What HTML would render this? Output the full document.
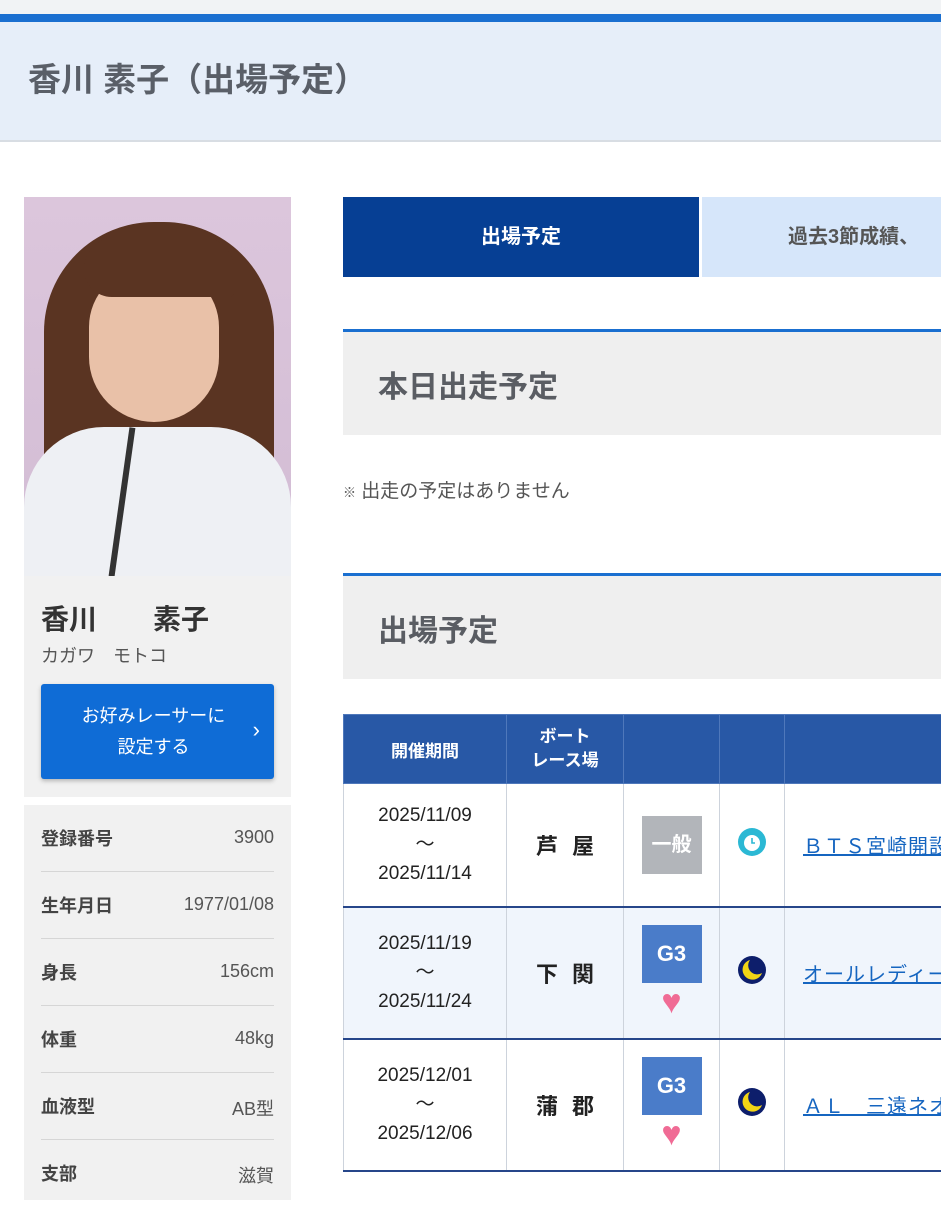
<!DOCTYPE html>
<html><head><meta charset="utf-8"><style>
*{margin:0;padding:0;box-sizing:border-box}
body{width:941px;height:1200px;overflow:hidden;background:#fff;font-family:"Liberation Sans","Noto Sans CJK JP",sans-serif;position:relative}
.abs{position:absolute}
.top{left:0;top:0;width:941px;height:14px;background:#f1f3f5}
.bl{left:0;top:14px;width:941px;height:8px;background:#1a6fd0}
.hd{left:0;top:22px;width:941px;height:120px;background:#e6eef9;border-bottom:2px solid #d8dde3}
.hd h1{position:absolute;left:28px;top:41px;font-size:33px;color:#5a5f68;font-weight:bold;line-height:1}
.photo{left:24px;top:197px;width:267px;height:379px;background:linear-gradient(#dcc6dc,#d2bcd4);overflow:hidden}
.namebox{left:24px;top:576px;width:267px;height:221px;background:#f1f1f1}
.info{left:24px;top:805px;width:267px;height:395px;background:#f1f1f1}
.row{position:absolute;left:17px;width:233px;height:67px;border-bottom:1px solid #d6d6d6;font-size:18px;color:#444}
.row b{position:absolute;left:0;top:20px}
.row span{position:absolute;right:0;top:22px;color:#555}
.sec{left:343px;width:598px;height:106px;background:#efefef;border-top:3px solid #1a6fd0}
.sec div{position:absolute;left:35px;top:30px;font-size:30px;font-weight:bold;color:#5a5d63}
table{position:absolute;left:343px;top:714px;border-collapse:collapse;width:620px;table-layout:fixed}
td,th{border:1px solid #cdd3dc}
th{background:#2858a6;color:#fff;font-size:17px;font-weight:bold;height:69px;border-color:#4f78bb}
td{text-align:center;font-size:19px;color:#222;overflow:hidden}
tr.r td{border-bottom:2px solid #26468a}
.date{line-height:29px}
.place{font-weight:bold;font-size:22px;letter-spacing:14px;padding-left:14px}
.g{display:inline-block;width:60px;height:58px;color:#fff;font-weight:bold;font-size:22px;line-height:58px}
.h{color:#f06b95;font-size:34px;line-height:38px}
a{color:#1565c0;font-size:20px;text-decoration:underline;letter-spacing:1px;white-space:nowrap}
</style></head><body>
<div class="abs top"></div><div class="abs bl"></div>
<div class="abs hd"><h1>香川 素子（出場予定）</h1></div>

<div class="abs photo">
<div class="abs" style="left:20px;top:25px;width:230px;height:330px;border-radius:110px 110px 40px 40px;background:#5a3422"></div>
<div class="abs" style="left:65px;top:70px;width:130px;height:155px;border-radius:60px 60px 65px 65px;background:#e9c1a8"></div>
<div class="abs" style="left:60px;top:40px;width:150px;height:60px;border-radius:70px 70px 10px 60px;background:#5a3422"></div>
<div class="abs" style="left:0;top:230px;width:267px;height:160px;border-radius:80px 80px 0 0;background:#eef0f4"></div>
<div class="abs" style="left:95px;top:230px;width:6px;height:150px;background:#333;transform:rotate(8deg)"></div>
</div>
<div class="abs namebox">
<div class="abs" style="left:17px;top:22px;font-size:28px;font-weight:bold;color:#333">香川　　素子</div>
<div class="abs" style="left:17px;top:66px;font-size:18px;color:#555">カガワ　モトコ</div>
<div class="abs" style="left:17px;top:108px;width:233px;height:95px;background:#0f6cd6;border-radius:3px;color:#fff;font-size:18px;text-align:center;line-height:31px;padding-top:17px;padding-right:8px;box-shadow:0 2px 4px rgba(0,0,0,.25)">お好みレーサーに<br>設定する<span style="position:absolute;right:14px;top:30px;font-size:22px">›</span></div>
</div>
<div class="abs info">
<div class="row" style="top:0"><b>登録番号</b><span>3900</span></div>
<div class="row" style="top:67px"><b>生年月日</b><span>1977/01/08</span></div>
<div class="row" style="top:134px"><b>身長</b><span>156cm</span></div>
<div class="row" style="top:201px"><b>体重</b><span>48kg</span></div>
<div class="row" style="top:268px"><b>血液型</b><span>AB型</span></div>
<div class="row" style="top:335px;border:none"><b>支部</b><span>滋賀</span></div>
</div>

<div class="abs" style="left:343px;top:197px;width:356px;height:80px;background:#063f94;color:#fff;font-weight:bold;font-size:20px;text-align:center;line-height:80px">出場予定</div>
<div class="abs" style="left:702px;top:197px;width:239px;height:80px;background:#d6e6fa;color:#555;font-weight:bold;font-size:20px;line-height:80px;padding-left:86px;white-space:nowrap;overflow:hidden">過去3節成績、</div>

<div class="abs sec" style="top:329px"><div>本日出走予定</div></div>
<div class="abs" style="left:343px;top:476px;font-size:19px;color:#555"><small style="font-size:13px">※</small> 出走の予定はありません</div>
<div class="abs sec" style="top:573px"><div>出場予定</div></div>

<table>
<colgroup><col style="width:163px"><col style="width:117px"><col style="width:96px"><col style="width:65px"><col style="width:179px"></colgroup>
<tr><th>開催期間</th><th style="line-height:24px">ボート<br>レース場</th><th></th><th></th><th></th></tr>
<tr class="r" style="height:123px"><td class="date">2025/11/09<br>〜<br>2025/11/14</td><td class="place">芦屋</td><td><span class="g" style="background:#b2b5ba;font-size:20px">一般</span></td><td><svg width="30" height="30" viewBox="0 0 30 30"><circle cx="15" cy="15" r="14" fill="#2bb8d4"/><circle cx="15" cy="16" r="8" fill="#fff"/><path d="M15 11v5h3" stroke="#2bb8d4" stroke-width="1.6" fill="none"/></svg></td><td style="text-align:left;padding-left:18px"><a>ＢＴＳ宮崎開設</a></td></tr>
<tr class="r" style="height:132px;background:#f0f5fc"><td class="date">2025/11/19<br>〜<br>2025/11/24</td><td class="place">下関</td><td><span class="g" style="background:#4a7cc9">G3</span><div class="h">♥</div></td><td><svg width="30" height="30" viewBox="0 0 30 30"><circle cx="15" cy="15" r="14" fill="#0d1e6b"/><path d="M13 5a10 10 0 1 0 12 13a9 9 0 0 1 -12 -13z" fill="#f2d515"/></svg></td><td style="text-align:left;padding-left:18px"><a>オールレディース</a></td></tr>
<tr class="r" style="height:132px"><td class="date">2025/12/01<br>〜<br>2025/12/06</td><td class="place">蒲郡</td><td><span class="g" style="background:#4a7cc9">G3</span><div class="h">♥</div></td><td><svg width="30" height="30" viewBox="0 0 30 30"><circle cx="15" cy="15" r="14" fill="#0d1e6b"/><path d="M13 5a10 10 0 1 0 12 13a9 9 0 0 1 -12 -13z" fill="#f2d515"/></svg></td><td style="text-align:left;padding-left:18px"><a>ＡＬ　三遠ネオ</a></td></tr>
</table>
</body></html>
